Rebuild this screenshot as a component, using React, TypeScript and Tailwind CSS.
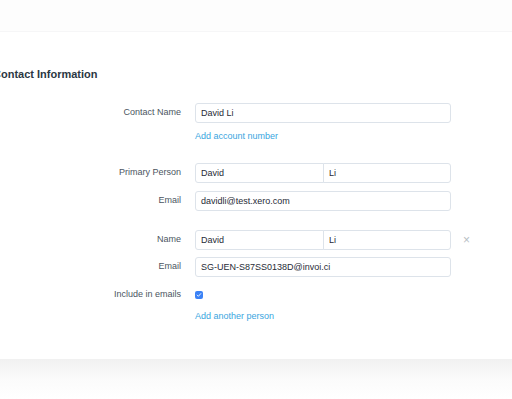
export default function App() {
  const font = { fontFamily: '"Liberation Sans", Arial, sans-serif' };
  const label = "w-[181px] shrink-0 text-right text-[9px] text-[#4b5561]";
  const input =
    "h-5 rounded-[3px] border border-[#dde3ea] bg-white px-[5px] text-[9px] leading-[18px] text-[#1f2b36]";

  return (
    <div className="h-[399px] w-[512px] overflow-hidden bg-white" style={font}>
      <div className="h-8 border-b border-[#f6f6f7] bg-[#fdfdfd]" />

      <div className="h-[327px] bg-white">
        <h2 className="ml-[-7px] pt-[36px] text-[11px] font-bold leading-[12px] text-[#2b3743]">
          Contact Information
        </h2>

        <div className="mt-[23px] flex flex-col">
          <div className="flex items-center">
            <div className={label}>Contact Name</div>
            <div className={`${input} ml-[14px] w-[256px]`}>David Li</div>
          </div>
          <div className="ml-[195px] mt-[7px] text-[9px] leading-[12px] text-[#3aa5e0]">
            Add account number
          </div>

          <div className="mt-[21px] flex items-center">
            <div className={label}>Primary Person</div>
            <div className="ml-[14px] flex w-[256px]">
              <div className={`${input} w-[129px] rounded-r-none`}>David</div>
              <div className={`${input} ml-[-1px] w-[128px] rounded-l-none`}>Li</div>
            </div>
          </div>
          <div className="mt-2 flex items-center">
            <div className={label}>Email</div>
            <div className={`${input} ml-[14px] w-[256px]`}>davidli@test.xero.com</div>
          </div>

          <div className="mt-[19px] flex items-center">
            <div className={label}>Name</div>
            <div className="ml-[14px] flex w-[256px]">
              <div className={`${input} w-[129px] rounded-r-none`}>David</div>
              <div className={`${input} ml-[-1px] w-[128px] rounded-l-none`}>Li</div>
            </div>
            <span className="ml-[12px] text-[12px] leading-none text-[#b8bec4]">×</span>
          </div>
          <div className="mt-[7px] flex items-center">
            <div className={label}>Email</div>
            <div className={`${input} ml-[14px] w-[256px]`}>SG-UEN-S87SS0138D@invoi.ci</div>
          </div>

          <div className="mt-[11px] flex items-center">
            <div className={label}>Include in emails</div>
            <div className="ml-[14px] flex h-[8px] w-[8px] items-center justify-center rounded-[2px] bg-[#3b82f6]">
              <svg width="6" height="6" viewBox="0 0 6 6" fill="none">
                <path d="M1.2 3.1 2.4 4.3 4.8 1.6" stroke="white" strokeWidth="0.9" strokeLinecap="round" strokeLinejoin="round" />
              </svg>
            </div>
          </div>
          <div className="ml-[195px] mt-[8px] text-[9px] leading-[12px] text-[#3aa5e0]">
            Add another person
          </div>
        </div>
      </div>

      <div className="h-[40px] bg-gradient-to-b from-[#f1f1f1] via-[#fbfbfb] to-white" />
    </div>
  );
}
